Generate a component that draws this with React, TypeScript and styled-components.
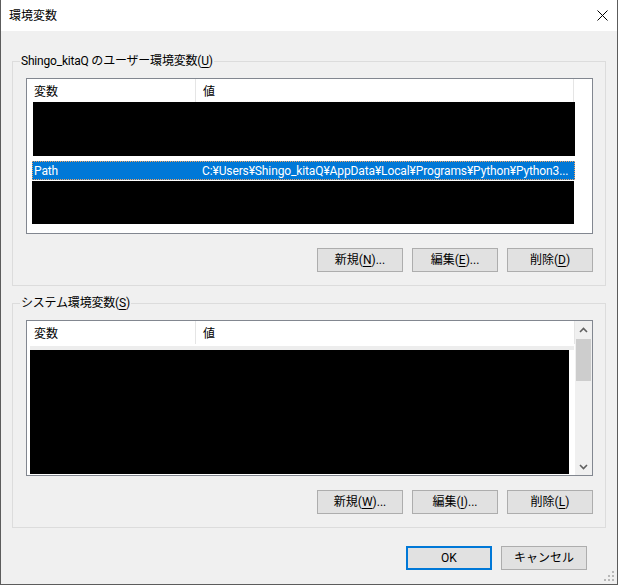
import React from "react";
import styled, { createGlobalStyle, css } from "styled-components";

const GlobalStyle = createGlobalStyle`
  html, body { margin: 0; padding: 0; background: #f0f0f0; }
  * { box-sizing: border-box; }
`;

const FONT = `Roboto, "Noto Sans CJK JP", sans-serif`;

const Window = styled.div`
  position: relative;
  width: 618px;
  height: 585px;
  border: 1px solid #5c5c5c;
  border-top: none;
  display: flex;
  flex-direction: column;
  font-family: ${FONT};
  font-size: 12px;
  color: #000;
  background: #f0f0f0;
`;

const TitleBar = styled.div`
  height: 31px;
  flex: none;
  background: #fff;
  display: flex;
  align-items: center;
  justify-content: space-between;
  padding: 0 9px 0 8px;
`;

const Title = styled.span`
  font-size: 12px;
  line-height: 16px;
`;

const Body = styled.div`
  flex: 1;
  display: flex;
  flex-direction: column;
  padding: 30px 11px 0 11px;
`;

const GroupBox = styled.div<{ $gapTop?: number }>`
  position: relative;
  height: 225px;
  border: 1px solid #dcdcdc;
  padding: 16px 12px 13px 13px;
  display: flex;
  flex-direction: column;
  gap: 14px;
  margin-top: ${(p) => p.$gapTop ?? 0}px;
`;

const GroupLabel = styled.span`
  position: absolute;
  top: -9px;
  left: 7px;
  padding: 0 1px;
  background: #f0f0f0;
  line-height: 16px;
  white-space: nowrap;
  letter-spacing: -0.2px;
`;

const Mn = styled.span`
  text-decoration: underline;
  text-underline-offset: 2px;
`;

const ListView = styled.div`
  height: 156px;
  flex: none;
  border: 1px solid #828790;
  background: #fff;
  display: flex;
  overflow: hidden;
`;

const ListMain = styled.div`
  flex: 1;
  min-width: 0;
  display: flex;
  flex-direction: column;
`;

const Header = styled.div`
  height: 23px;
  flex: none;
  display: flex;
`;

const HeaderCell = styled.div<{ $w?: number }>`
  ${(p) => (p.$w ? css`width: ${p.$w}px; flex: none;` : css`flex: 1;`)}
  border-right: 1px solid #e5e5e5;
  padding: 3px 0 0 7px;
  line-height: 16px;
  display: flex;
  align-items: center;
`;

const HeaderRest = styled.div`
  flex: none;
  width: 18px;
`;

const Redaction = styled.div<{ $left: number; $w: number; $h: number; $top?: number }>`
  flex: none;
  background: #000;
  margin-left: ${(p) => p.$left}px;
  margin-top: ${(p) => p.$top ?? 0}px;
  width: ${(p) => p.$w}px;
  height: ${(p) => p.$h}px;
`;

const Strip = styled.div<{ $left: number; $w: number; $h: number; $top?: number }>`
  flex: none;
  background: #ededed;
  margin-left: ${(p) => p.$left}px;
  margin-top: ${(p) => p.$top ?? 0}px;
  width: ${(p) => p.$w}px;
  height: ${(p) => p.$h}px;
`;

const SelectedRow = styled.div<{ $left: number; $w: number; $top?: number }>`
  flex: none;
  margin-left: ${(p) => p.$left}px;
  margin-top: ${(p) => p.$top ?? 0}px;
  width: ${(p) => p.$w}px;
  height: 19px;
  background: #0078d7;
  color: #fff;
  outline: 1px dotted #f4a460;
  outline-offset: -1px;
  display: flex;
  align-items: center;
  line-height: 16px;
  white-space: nowrap;
`;

const RowCell = styled.span<{ $w?: number; $pad: number }>`
  ${(p) => (p.$w ? css`width: ${p.$w}px; flex: none;` : css`flex: 1; min-width: 0;`)}
  padding-left: ${(p) => p.$pad}px;
  overflow: hidden;
  letter-spacing: -0.12px;
`;

const ScrollBar = styled.div`
  width: 17px;
  flex: none;
  background: #f0f0f0;
  display: flex;
  flex-direction: column;
  align-items: center;
`;

const ScrollArrow = styled.div`
  height: 17px;
  width: 100%;
  flex: none;
  display: flex;
  align-items: center;
  justify-content: center;
`;

const ScrollThumb = styled.div`
  width: 15px;
  height: 42px;
  margin-top: 1px;
  background: #cdcdcd;
  flex: none;
`;

const ScrollSpace = styled.div`
  flex: 1;
`;

const ButtonRow = styled.div`
  display: flex;
  justify-content: flex-end;
  gap: 9px;
`;

const Button = styled.button<{ $default?: boolean }>`
  width: 86px;
  height: 24px;
  padding: 0;
  background: #e1e1e1;
  border: 1px solid #adadad;
  font-family: ${FONT};
  font-size: 12px;
  line-height: 16px;
  color: #000;
  display: flex;
  align-items: center;
  justify-content: center;
  ${(p) =>
    p.$default &&
    css`
      border: 2px solid #0078d7;
    `}
`;

const Footer = styled.div`
  display: flex;
  justify-content: flex-end;
  gap: 9px;
  margin-top: 18px;
  padding-right: 19px;
`;

const Grip = styled.svg`
  position: absolute;
  right: 2px;
  bottom: 2px;
`;

const CloseX = () => (
  <svg width="11" height="11" viewBox="0 0 11 11">
    <path d="M0.5 0.5 L10.5 10.5 M10.5 0.5 L0.5 10.5" stroke="#000" strokeWidth="1" fill="none" />
  </svg>
);

const Chevron = ({ up }: { up?: boolean }) => (
  <svg width="9" height="6" viewBox="0 0 9 6">
    <path
      d={up ? "M1 5 L4.5 1.5 L8 5" : "M1 1 L4.5 4.5 L8 1"}
      stroke="#606060"
      strokeWidth="1.6"
      fill="none"
    />
  </svg>
);

export default function App() {
  return (
    <>
      <GlobalStyle />
      <Window>
        <TitleBar>
          <Title>環境変数</Title>
          <CloseX />
        </TitleBar>
        <Body>
          <GroupBox>
            <GroupLabel>
              Shingo_kitaQ のユーザー環境変数(<Mn>U</Mn>)
            </GroupLabel>
            <ListView>
              <ListMain>
                <Header>
                  <HeaderCell $w={169}>変数</HeaderCell>
                  <HeaderCell>値</HeaderCell>
                  <HeaderRest />
                </Header>
                <Redaction $left={6} $w={542} $h={54} />
                <SelectedRow $left={5} $w={543} $top={5}>
                  <RowCell $w={165} $pad={2}>Path</RowCell>
                  <RowCell $pad={5}>C:¥Users¥Shingo_kitaQ¥AppData¥Local¥Programs¥Python¥Python3...</RowCell>
                </SelectedRow>
                <Redaction $left={5} $w={542} $h={43} $top={1} />
              </ListMain>
            </ListView>
            <ButtonRow>
              <Button>新規(<Mn>N</Mn>)...</Button>
              <Button>編集(<Mn>E</Mn>)...</Button>
              <Button>削除(<Mn>D</Mn>)</Button>
            </ButtonRow>
          </GroupBox>
          <GroupBox $gapTop={17}>
            <GroupLabel>
              システム環境変数(<Mn>S</Mn>)
            </GroupLabel>
            <ListView>
              <ListMain>
                <Header>
                  <HeaderCell $w={169}>変数</HeaderCell>
                  <HeaderCell>値</HeaderCell>
                </Header>
                <Strip $left={3} $w={544} $h={4} $top={2} />
                <Redaction $left={3} $w={539} $h={124} />
              </ListMain>
              <ScrollBar>
                <ScrollArrow>
                  <Chevron up />
                </ScrollArrow>
                <ScrollThumb />
                <ScrollSpace />
                <ScrollArrow>
                  <Chevron />
                </ScrollArrow>
              </ScrollBar>
            </ListView>
            <ButtonRow>
              <Button>新規(<Mn>W</Mn>)...</Button>
              <Button>編集(<Mn>I</Mn>)...</Button>
              <Button>削除(<Mn>L</Mn>)</Button>
            </ButtonRow>
          </GroupBox>
          <Footer>
            <Button $default>OK</Button>
            <Button>キャンセル</Button>
          </Footer>
        </Body>
        <Grip width="12" height="12" viewBox="0 0 12 12">
          {[
            [9, 1],
            [9, 5],
            [5, 5],
            [9, 9],
            [5, 9],
            [1, 9],
          ].map(([x, y], i) => (
            <rect key={i} x={x} y={y} width="2" height="2" fill="#b8b8b8" />
          ))}
        </Grip>
      </Window>
    </>
  );
}
